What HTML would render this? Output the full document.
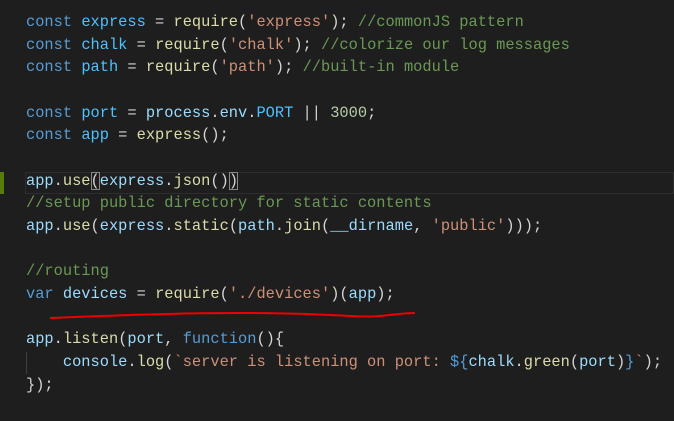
<!DOCTYPE html>
<html><head><style>
html,body{margin:0;padding:0;background:#1e1e1e;width:674px;height:421px;overflow:hidden}
pre{position:absolute;left:26px;top:11px;margin:0;font-family:"Liberation Mono",monospace;font-size:15.36px;line-height:22.67px;color:#d4d4d4}
.k{color:#569cd6}.v{color:#9cdcfe}.c{color:#4fc1ff}.f{color:#dcdcaa}.s{color:#ce9178}.m{color:#6a9955}.n{color:#b5cea8}
.box{outline:1px solid #888;outline-offset:-1px}
</style></head><body>
<div style="position:absolute;left:25px;top:172px;width:649px;height:22px;border:1px solid #2d2d2d;box-sizing:border-box"></div>
<div style="position:absolute;left:0;top:172px;width:4px;height:22px;background:#587c0c"></div>
<div style="position:absolute;left:26px;top:352px;width:1px;height:22px;background:#404040"></div>
<pre><span class="k">const</span> <span class="c">express</span> = <span class="f">require</span>(<span class="s">'express'</span>); <span class="m">//commonJS pattern</span>
<span class="k">const</span> <span class="c">chalk</span> = <span class="f">require</span>(<span class="s">'chalk'</span>); <span class="m">//colorize our log messages</span>
<span class="k">const</span> <span class="c">path</span> = <span class="f">require</span>(<span class="s">'path'</span>); <span class="m">//built-in module</span>

<span class="k">const</span> <span class="c">port</span> = <span class="v">process</span>.<span class="v">env</span>.<span class="c">PORT</span> || <span class="n">3000</span>;
<span class="k">const</span> <span class="c">app</span> = <span class="f">express</span>();

<span class="v">app</span>.<span class="f">use</span><span class="box">(</span><span class="v">express</span>.<span class="f">json</span>()<span class="box">)</span>
<span class="m">//setup public directory for static contents</span>
<span class="v">app</span>.<span class="f">use</span>(<span class="v">express</span>.<span class="f">static</span>(<span class="v">path</span>.<span class="f">join</span>(<span class="v">__dirname</span>, <span class="s">'public'</span>)));

<span class="m">//routing</span>
<span class="k">var</span> <span class="v">devices</span> = <span class="f">require</span>(<span class="s">'./devices'</span>)(<span class="v">app</span>);

<span class="v">app</span>.<span class="f">listen</span>(<span class="v">port</span>, <span class="k">function</span>(){
    <span class="v">console</span>.<span class="f">log</span>(<span class="s">`server is listening on port: </span><span class="k">${</span><span class="v">chalk</span>.<span class="f">green</span>(<span class="v">port</span>)<span class="k">}</span><span class="s">`</span>);
});</pre>
<svg style="position:absolute;left:0;top:0" width="674" height="421"><path d="M50 318 C150 314 250 310 350 316 C385 318 395 313 415 313" stroke="#e00" stroke-width="2" fill="none"/></svg>
</body></html>
